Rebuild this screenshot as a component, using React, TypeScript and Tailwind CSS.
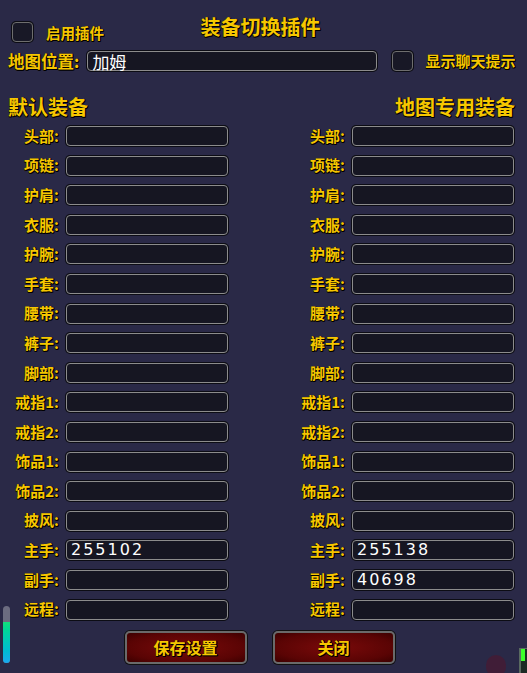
import React from 'react';

const slots = ['头部', '项链', '护肩', '衣服', '护腕', '手套', '腰带', '裤子', '脚部', '戒指1', '戒指2', '饰品1', '饰品2', '披风', '主手', '副手', '远程'];

const defaultGear: Record<string, string> = { 主手: '255102' };
const mapGear: Record<string, string> = { 主手: '255138', 副手: '40698' };

const shadow = '[text-shadow:1px_1px_0_#000,1px_0_0_#000,0_1px_0_#000]';

function Field({ value, className = '' }: { value?: string; className?: string }) {
  return (
    <div
      className={`h-[20px] rounded-[4px] border border-[#8c8c8c] bg-[#161622] shadow-[0_0_0_1px_#0c0c14] flex items-center pl-[4px] text-white leading-none ${className}`}
    >
      {value}
    </div>
  );
}

function Check() {
  return <div className="w-[21px] h-[20px] rounded-[4px] border border-[#6e6e6e] bg-[#181826] shadow-[0_0_0_1px_#0c0c14]" />;
}

function GearColumn({ data, labelWidth }: { data: Record<string, string>; labelWidth: string }) {
  return (
    <div className="flex flex-col gap-[9.6px]">
      {slots.map((s) => (
        <div key={s} className="flex items-center h-[20px]">
          <div className={`${labelWidth} text-right pr-[7px] text-[15px] font-bold text-[#f6c700] ${shadow}`}>{s}:</div>
          <Field
            value={data[s]}
            className="w-[162px] text-[16px] tracking-[2px] font-['DejaVu_Sans',sans-serif]"
          />
        </div>
      ))}
    </div>
  );
}

export default function App() {
  return (
    <div className="relative w-[527px] h-[673px] overflow-hidden bg-[#2a2947] font-['Noto_Sans_CJK_SC',sans-serif] select-none">
      {/* header */}
      <div className="relative h-[46px]">
        <div className="absolute left-[12px] top-[20px] flex items-center">
          <Check />
          <span className={`ml-[13px] mt-[2px] text-[14.5px] font-bold text-[#f6c700] ${shadow}`}>启用插件</span>
        </div>
        <div className={`absolute left-0 right-[6px] top-[12px] text-center text-[20px] font-bold text-[#f6c700] ${shadow}`}>
          装备切换插件
        </div>
      </div>

      {/* map row */}
      <div className="flex items-center pl-[8px] h-[20px] mt-[5px]">
        <span className={`text-[16.5px] font-bold text-[#f6c700] ${shadow}`}>地图位置:</span>
        <Field value="加姆" className="ml-[8px] w-[290px] text-[17px] font-['Noto_Sans_CJK_SC',sans-serif]" />
        <div className="ml-[15px]">
          <Check />
        </div>
        <span className={`ml-[12px] text-[15px] font-bold text-[#f6c700] ${shadow}`}>显示聊天提示</span>
      </div>

      {/* section headings */}
      <div className="flex justify-between px-[12px] pl-[8px] mt-[21px]">
        <span className={`text-[20px] font-bold text-[#f6c700] ${shadow}`}>默认装备</span>
        <span className={`text-[20px] font-bold text-[#f6c700] ${shadow}`}>地图专用装备</span>
      </div>

      {/* gear grid */}
      <div className="flex mt-[4px]">
        <GearColumn data={defaultGear} labelWidth="w-[66px]" />
        <div className="ml-[66px]">
          <GearColumn data={mapGear} labelWidth="w-[58px]" />
        </div>
      </div>

      {/* buttons */}
      <div className="flex justify-center gap-[26px] mt-[11px] pr-[8px]">
        {['保存设置', '关闭'].map((t) => (
          <button
            key={t}
            className={`w-[122px] h-[33px] rounded-[5px] border-2 border-[#6a6a6a] shadow-[0_0_0_1px_#111] bg-[radial-gradient(ellipse_at_center,#7a0a0a_0%,#5a0404_70%,#3c0000_100%)] text-[16px] font-bold text-[#f6c700] ${shadow}`}
          >
            {t}
          </button>
        ))}
      </div>

      {/* scroll meter */}
      <div className="absolute left-[3px] top-[606px] w-[7px] h-[57px] rounded-full overflow-hidden bg-[#6c6c80] flex flex-col justify-end">
        <div className="h-[41px] bg-gradient-to-b from-[#12e07a] to-[#1aa8f0]" />
      </div>

      {/* decorations */}
      <div className="absolute left-[486px] top-[655px] w-[20px] h-[22px] rounded-full bg-[#4a1830] opacity-70" />
      <div className="absolute left-[519px] top-[648px] w-[10px] h-[26px] bg-[#1c2a24] border-l-2 border-t border-[#5a6a60]">
        <div className="w-[4px] h-[12px] bg-[#3cff2a]" />
      </div>
    </div>
  );
}
